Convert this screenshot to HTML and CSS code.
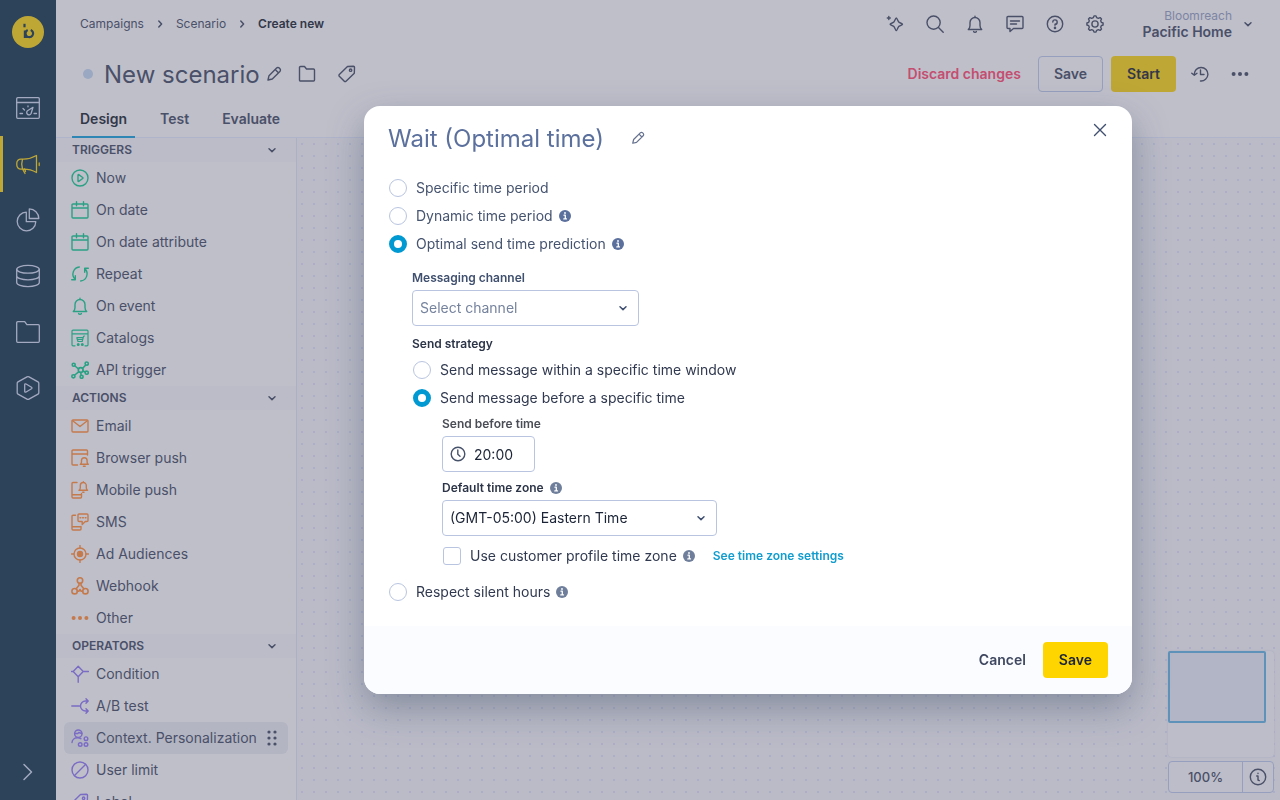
FILE: index.html
```
<!DOCTYPE html>
<html lang="en">
<head>
<meta charset="utf-8">
<meta name="viewport" content="width=device-width, initial-scale=1">
<title>New scenario</title>
<link rel="stylesheet" href="styles.css">
</head>
<body>
<svg class="sprite" aria-hidden="true">
  <symbol id="chevron-down" viewBox="0 0 16 16"><path d="M5 6.800 8 9.600l3-2.800" stroke-width="1.500"/></symbol>
  <symbol id="chevron-right" viewBox="0 0 16 16"><path d="m6.800 5 2.800 3-2.800 3" stroke-width="1.500"/></symbol>
  <symbol id="pencil" viewBox="0 0 16 16"><path d="M2 14l1-4.300 7.600-7.600a1.900 1.900 0 0 1 2.700 0l.6.600a1.900 1.900 0 0 1 0 2.700L6.300 13zM9.200 3.600l3.200 3.200"/></symbol>
  <symbol id="folder" viewBox="0 0 18 18"><path d="M1.500 2.500a1 1 0 0 1 1-1h4l2 2.500h7a1 1 0 0 1 1 1v10a1 1 0 0 1-1 1h-13a1 1 0 0 1-1-1z"/></symbol>
  <symbol id="tag" viewBox="0 0 18 18"><path d="m9.500 1.500 6-.2a1 1 0 0 1 1 1l-.2 6L8 16.300a1.200 1.200 0 0 1-1.700 0l-5-5a1.200 1.200 0 0 1 0-1.700z"/><circle cx="12.600" cy="5.200" r="1.200"/></symbol>
  <symbol id="bell" viewBox="0 0 18 18"><path d="M9 1.200v1.300M2.300 14.500h13.400c-1.200-1-1.700-2.200-1.700-4V7.500a5 5 0 0 0-10 0v3c0 1.800-.5 3-1.700 4zM7.600 16.600c.6.900 2.200.9 2.800 0"/></symbol>
  <symbol id="info" viewBox="0 0 12 12"><circle cx="6" cy="6" r="6" fill="currentColor" stroke="none"/><path d="M5 5.200h1.300v3.500M4.800 8.900h2.700" stroke="#fff" stroke-width="1.300"/><circle cx="6" cy="3" r=".9" fill="#fff" stroke="none"/></symbol>
  <symbol id="calendar" viewBox="0 0 18 18"><path d="M1 4a1 1 0 0 1 1-1h14a1 1 0 0 1 1 1v12a1 1 0 0 1-1 1H2a1 1 0 0 1-1-1zM1 7h16M5.500.8v4M12.500.8v4"/></symbol>
  <symbol id="play" viewBox="0 0 18 18"><circle cx="9" cy="9" r="8"/><path d="M7 6v6c0 .5.300.6.700.4l4-2.900c.4-.3.400-.7 0-1l-4-2.900c-.4-.2-.7-.1-.7.400z"/></symbol>
  <symbol id="repeat" viewBox="0 0 18 18"><path d="M4 14.200A7.200 7.200 0 0 1 8.300 2M9.700 16A7.200 7.200 0 0 0 14.200 4M17.300 3.300h-3.600v4M.7 14.700h3.600v-4"/></symbol>
  <symbol id="catalog" viewBox="0 0 18 18"><path d="M4 16.800H2a1 1 0 0 1-1-1V2.200a1 1 0 0 1 1-1h14a1 1 0 0 1 1 1v13.600a1 1 0 0 1-1 1h-2M1 4.800h16M13.500 7l-1 .3-1.300 5.200H7L5.800 8.700h6.200M6.400 10.500h5.200" stroke-width="1.200"/><circle cx="7.200" cy="15.500" r=".8"/><circle cx="11.300" cy="15.500" r=".8"/></symbol>
  <symbol id="api" viewBox="0 0 18 18"><g stroke-width="1.600"><path d="m7.500 8-3.500-3M11.700 7.300l2.800-3M12 10l2 1M7.700 10.800l-4 3.200M9.800 11.500l.3 3"/><circle cx="9.700" cy="9" r="2.400"/><circle cx="2.700" cy="3.800" r="1.500"/><circle cx="15.700" cy="2.600" r="1.600"/><circle cx="15.700" cy="11.700" r="1.600"/><circle cx="2.400" cy="15.300" r="1.600"/><circle cx="10.600" cy="15.800" r="1.500"/></g></symbol>
  <symbol id="mail" viewBox="0 0 18 18"><rect x="1" y="3" width="16" height="12" rx="1"/><path d="m2 4 7 5.500L16 4"/></symbol>
  <symbol id="browser-push" viewBox="0 0 18 18"><path d="M6.500 16H2a1 1 0 0 1-1-1V2a1 1 0 0 1 1-1h13.500a1 1 0 0 1 1 1v4M1 5h15.500M9.300 15.300h8c-.9-.6-1.200-1.300-1.200-2.300v-1.500a2.800 2.800 0 0 0-5.600 0V13c0 1-.3 1.700-1.200 2.300zM12.400 17.200h1.800"/></symbol>
  <symbol id="mobile-push" viewBox="0 0 18 18"><path d="M6 1.500H2a1 1 0 0 0-1 1V16a1 1 0 0 0 1 1h7.500a1 1 0 0 0 1-1v-3.500M1 13.700h9.500M8 9.300h8.600c-1-.6-1.300-1.300-1.300-2.500V4.500a3 3 0 0 0-6 0v2.300c0 1.200-.3 1.900-1.300 2.500zM12.300.8v.5M11.700 11.300H13"/></symbol>
  <symbol id="sms" viewBox="0 0 18 18"><path d="M4.500 2.200H2a1 1 0 0 0-1 1V16a1 1 0 0 0 1 1h7a1 1 0 0 0 1-1v-2.500M1 13.700h9M8 1h8a1 1 0 0 1 1 1v5.500a1 1 0 0 1-1 1h-1.700L11.200 11.500V8.500H8a1 1 0 0 1-1-1V2a1 1 0 0 1 1-1zM9 4.800h.8M11.600 4.800h.8M14.200 4.800h.8"/></symbol>
  <symbol id="target" viewBox="0 0 18 18"><circle cx="9" cy="9" r="6"/><circle cx="9" cy="9" r="2.500" fill="currentColor"/><path d="M9 .5V3M9 15v2.500M.5 9H3M15 9h2.500"/></symbol>
  <symbol id="webhook" viewBox="0 0 18 18"><g stroke-width="1.600"><circle cx="9" cy="3.500" r="2.700"/><circle cx="3.600" cy="14.200" r="2.700"/><circle cx="14.400" cy="14.200" r="2.700"/><path d="M8 6.200v2L5.200 11.700M10 6.200v2l2.800 3.500M6.300 14.200h1.500L9 12.500l1.200 1.700h1.500"/></g></symbol>
  <symbol id="dots" viewBox="0 0 18 18"><g fill="currentColor" stroke="none"><circle cx="2.600" cy="9" r="2"/><circle cx="9" cy="9" r="2"/><circle cx="15.400" cy="9" r="2"/></g></symbol>
  <symbol id="condition" viewBox="0 0 18 18"><path d="m7.200 1.200 5 5.300-5 5.200-5-5.200zM12.200 6.500h5.300M7.200 11.700v5.500M.5 6.500h1.700"/></symbol>
  <symbol id="split" viewBox="0 0 18 18"><path d="M.8 9h7.700M17 4h-2.500a5 5 0 0 0 0 10H17M15 1.800 17.200 4 15 6.300M15 11.800l2.200 2.200-2.200 2.300"/></symbol>
  <symbol id="people" viewBox="0 0 18 18"><circle cx="7.300" cy="4.700" r="3.700"/><path d="M3.800 4.500h3l1-1 3 1M1 13.500c.2-3 2.800-4.700 5.500-4.700 1.500 0 2.500.3 3.400.9"/><circle cx="15" cy="9.700" r="1.800"/><circle cx="15" cy="15.500" r="1.800"/><circle cx="9.200" cy="15.500" r="1.800"/></symbol>
  <symbol id="ban" viewBox="0 0 18 18"><circle cx="9" cy="9" r="8"/><path d="M14.500 3.500l-11 11"/></symbol>
</svg>

<div class="app">
  <nav class="rail" aria-label="Main">
    <a class="logo" href="#" aria-label="Bloomreach">
      <svg viewBox="0 0 32 32"><circle cx="16" cy="16" r="16" fill="#bfa736" stroke="none"/><path d="M12.500 7.800v3.500" stroke="#2d4359" stroke-width="2.200" stroke-linecap="butt"/><path d="M12.900 22v-7.500M15.700 14a3.800 3.800 0 1 0 3-.1M12.900 21h5" stroke="#2d4359" stroke-width="2.200" stroke-linecap="butt"/></svg>
    </a>
    <a class="rail-item" href="#" aria-label="Dashboards"><svg viewBox="0 0 24 24"><rect x=".7" y="1.700" width="22.600" height="20.600" rx="1"/><path d="M.7 6.500h22.600M4 17.500h2.500M18 17.500h2.500M7 12.500l1.500 1.500M12 9.800v1M17 11.300l-5.500 3.500a2.300 2.300 0 1 0 3.600 2.700z"/></svg></a>
    <a class="rail-item current" href="#" aria-label="Campaigns"><svg viewBox="0 0 24 24"><path d="M20.500 3.500v17c-4-2.300-8-3.400-13-3.400H4.800a4 4 0 0 1-4-4v-2a4 4 0 0 1 4-4h2.700c5 0 9-1.300 13-3.600zM6.500 7.200c-1 3-1 6.800 0 9.800l2.500 4.500M8.800 17l.7 2.500M23.200 11v2.500"/></svg></a>
    <a class="rail-item" href="#" aria-label="Analyses"><svg viewBox="0 0 24 24"><path d="M10.300 4.200a9.300 9.300 0 1 0 9.500 9.500h-9.500zM13.300.9a9.800 9.800 0 0 1 9.500 9.600h-9.500z"/></svg></a>
    <a class="rail-item" href="#" aria-label="Data"><svg viewBox="0 0 24 24"><ellipse cx="12" cy="5.300" rx="11.300" ry="3.900"/><path d="M.7 5.300v13.300c0 2.200 5 4 11.300 4s11.300-1.800 11.300-4V5.300M.7 12c0 2.100 5 3.900 11.300 3.900S23.300 14.100 23.300 12"/></svg></a>
    <a class="rail-item" href="#" aria-label="Files"><svg viewBox="0 0 24 24"><path d="M.7 2.700a1 1 0 0 1 1-1h7l2.200 3h11.400a1 1 0 0 1 1 1v15.600a1 1 0 0 1-1 1H1.700a1 1 0 0 1-1-1z"/></svg></a>
    <a class="rail-item" href="#" aria-label="Experiences"><svg viewBox="0 0 24 24"><path d="M11 .9a2 2 0 0 1 2 0l9 5a1.600 1.600 0 0 1 .8 1.400v9.400a1.600 1.600 0 0 1-.8 1.400l-9 5a2 2 0 0 1-2 0l-9-5a1.600 1.600 0 0 1-.8-1.400V7.300A1.600 1.600 0 0 1 2 5.900zM8.700 8.800v6.400c0 .9.700 1.200 1.400.8l5.400-3.200c.6-.4.600-1.200 0-1.600L10.100 8c-.7-.4-1.400-.1-1.400.8z"/></svg></a>
    <button class="rail-expand" aria-label="Expand menu"><svg viewBox="0 0 24 24"><path d="m8 4.500 7.500 7.500L8 19.500" stroke-width="1.500"/></svg></button>
  </nav>

  <main class="main">
    <header class="topbar">
      <nav class="crumbs" aria-label="Breadcrumb">
        <a href="#">Campaigns</a>
        <svg class="i16"><use href="#chevron-right"/></svg>
        <a href="#">Scenario</a>
        <svg class="i16"><use href="#chevron-right"/></svg>
        <span class="here">Create new</span>
      </nav>
      <div class="tools">
        <button aria-label="Assistant"><svg viewBox="0 0 18 18"><path d="M10.300 3c.8 0 1.700 3.400 2.400 4.100.7.700 3.800 1.400 3.800 2.200s-3.100 1.500-3.800 2.200c-.7.700-1.600 4.100-2.400 4.100s-1.700-3.400-2.400-4.100c-.7-.7-3.800-1.400-3.800-2.200s3.100-1.500 3.800-2.200C8.600 6.400 9.500 3 10.300 3zM2.800 1.500v3M1.300 3h3"/></svg></button>
        <button aria-label="Search"><svg viewBox="0 0 18 18"><circle cx="7.600" cy="7.600" r="6.600"/><path d="m12.500 12.500 4.700 4.700"/></svg></button>
        <button aria-label="Notifications"><svg><use href="#bell"/></svg></button>
        <button aria-label="Messages"><svg viewBox="0 0 18 18"><path d="M1 2.500a1 1 0 0 1 1-1h14a1 1 0 0 1 1 1v10a1 1 0 0 1-1 1H7.500L4 16.500v-3H2a1 1 0 0 1-1-1zM4.500 6h9M4.500 9h6"/></svg></button>
        <button aria-label="Help"><svg viewBox="0 0 18 18"><circle cx="9" cy="9" r="7.700"/><path d="M6.800 7A2.200 2.200 0 1 1 9 9.300v1"/><circle cx="9" cy="12.900" r=".6"/></svg></button>
        <button aria-label="Settings"><svg viewBox="0 0 18 18"><circle cx="9" cy="9" r="3.100"/><path d="m7.300 2.700.7-1.800h2l.7 1.800 1.600.7 1.800-.8 1.400 1.400-.8 1.700.6 1.600 1.800.7v2l-1.800.7-.6 1.600.8 1.700-1.400 1.400-1.800-.8-1.600.7-.7 1.800H8l-.7-1.800-1.600-.7-1.800.8L2.500 14l.8-1.700-.6-1.600L.9 10V8l1.800-.7.6-1.600L2.500 4l1.400-1.400 1.800.8z"/></svg></button>
      </div>
      <button class="account">
        <span class="account-names"><span class="org">Bloomreach</span><span class="project">Pacific Home</span></span>
        <svg class="i16"><use href="#chevron-down"/></svg>
      </button>
    </header>

    <section class="titlebar">
      <span class="status"></span>
      <h1>New scenario</h1>
      <button class="bare" aria-label="Rename"><svg class="i16"><use href="#pencil"/></svg></button>
      <button class="bare gap-left" aria-label="Folder"><svg><use href="#folder"/></svg></button>
      <button class="bare gap-more" aria-label="Tags"><svg><use href="#tag"/></svg></button>
      <div class="actions">
        <button class="discard">Discard changes</button>
        <button class="btn outline">Save</button>
        <button class="btn start">Start</button>
        <button class="bare wide" aria-label="History"><svg viewBox="0 0 18 18"><path d="M3.300 9.500A6.800 6.800 0 1 1 9.500 16M.8 8.300l2.500 2 2.700-2M9.500 5v4.500H13"/></svg></button>
        <button class="bare wide" aria-label="More"><svg><use href="#dots"/></svg></button>
      </div>
    </section>

    <nav class="tabs" aria-label="Scenario views">
      <a class="tab selected" href="#">Design</a>
      <a class="tab" href="#">Test</a>
      <a class="tab" href="#">Evaluate</a>
    </nav>

    <div class="workspace">
      <aside class="palette">
        <button class="group">TRIGGERS<svg class="i16"><use href="#chevron-down"/></svg></button>
        <ul class="green">
          <li><svg><use href="#play"/></svg>Now</li>
          <li><svg><use href="#calendar"/></svg>On date</li>
          <li><svg><use href="#calendar"/></svg>On date attribute</li>
          <li><svg><use href="#repeat"/></svg>Repeat</li>
          <li><svg><use href="#bell"/></svg>On event</li>
          <li><svg><use href="#catalog"/></svg>Catalogs</li>
          <li><svg><use href="#api"/></svg>API trigger</li>
        </ul>
        <button class="group">ACTIONS<svg class="i16"><use href="#chevron-down"/></svg></button>
        <ul class="orange">
          <li><svg><use href="#mail"/></svg>Email</li>
          <li><svg><use href="#browser-push"/></svg>Browser push</li>
          <li><svg><use href="#mobile-push"/></svg>Mobile push</li>
          <li><svg><use href="#sms"/></svg>SMS</li>
          <li><svg><use href="#target"/></svg>Ad Audiences</li>
          <li><svg><use href="#webhook"/></svg>Webhook</li>
          <li><svg><use href="#dots"/></svg>Other</li>
        </ul>
        <button class="group">OPERATORS<svg class="i16"><use href="#chevron-down"/></svg></button>
        <ul class="purple">
          <li><svg><use href="#condition"/></svg>Condition</li>
          <li><svg><use href="#split"/></svg>A/B test</li>
          <li class="hovered"><svg><use href="#people"/></svg>Context. Personalization
            <svg class="grip" viewBox="0 0 16 16"><g fill="currentColor" stroke="none"><circle cx="4" cy="2" r="1.600"/><circle cx="10" cy="2" r="1.600"/><circle cx="4" cy="8" r="1.600"/><circle cx="10" cy="8" r="1.600"/><circle cx="4" cy="14" r="1.600"/><circle cx="10" cy="14" r="1.600"/></g></svg></li>
          <li><svg><use href="#ban"/></svg>User limit</li>
          <li><svg><use href="#tag"/></svg>Label</li>
        </ul>
      </aside>
      <section class="canvas" aria-label="Canvas">
        <div class="map-tools">
          <div class="minimap"><div class="viewport"></div></div>
          <div class="zoom"><button class="level">100%</button><button class="about" aria-label="Info"><svg viewBox="0 0 18 18"><circle cx="9" cy="9" r="7.700"/><path d="M7.700 8H9v4l1.300.6M9 5.200v.3"/></svg></button></div>
        </div>
      </section>
    </div>
  </main>
</div>

<div class="overlay">
  <form class="dialog" role="dialog" aria-labelledby="dialog-title">
    <header class="dialog-head">
      <h2 id="dialog-title">Wait (Optimal time)</h2>
      <button type="button" class="bare edit" aria-label="Rename"><svg class="i14"><use href="#pencil"/></svg></button>
      <button type="button" class="bare close" aria-label="Close"><svg class="i16" viewBox="0 0 16 16"><path d="m2.500 2.500 11 11M13.500 2.500l-11 11"/></svg></button>
    </header>
    <div class="dialog-body">
      <div class="options soft">
        <label class="option"><input type="radio" name="mode">Specific time period</label>
        <label class="option"><input type="radio" name="mode">Dynamic time period <svg class="info"><use href="#info"/></svg></label>
        <label class="option"><input type="radio" name="mode" checked>Optimal send time prediction <svg class="info"><use href="#info"/></svg></label>
      </div>
      <div class="nested">
        <label class="caption soft-caption" for="channel">Messaging channel</label>
        <div class="field channel"><select id="channel"><option>Select channel</option></select><svg class="i16"><use href="#chevron-down"/></svg></div>
        <p class="caption strategy" id="strategy">Send strategy</p>
        <div class="options" role="radiogroup" aria-labelledby="strategy">
          <label class="option"><input type="radio" name="strategy">Send message within a specific time window</label>
          <label class="option"><input type="radio" name="strategy" checked>Send message before a specific time</label>
        </div>
        <div class="deep">
          <label class="caption gray-caption" for="time">Send before time</label>
          <div class="field time"><svg class="i16" viewBox="0 0 16 16"><circle cx="8" cy="8" r="6.800"/><path d="M7.800 4v4.300l2.200 2"/></svg><input id="time" type="text" value="20:00"></div>
          <label class="caption zone-caption" for="zone">Default time zone <svg class="info muted"><use href="#info"/></svg></label>
          <div class="field zone"><select id="zone"><option>(GMT-05:00) Eastern Time</option></select><svg class="i16"><use href="#chevron-down"/></svg></div>
          <div class="profile">
            <label class="option"><input type="checkbox">Use customer profile time zone <svg class="info muted"><use href="#info"/></svg></label>
            <a href="#">See time zone settings</a>
          </div>
        </div>
      </div>
      <label class="option silent"><input type="radio" name="mode">Respect silent hours <svg class="info muted"><use href="#info"/></svg></label>
    </div>
    <footer class="dialog-foot">
      <button type="button" class="btn plain">Cancel</button>
      <button type="submit" class="btn primary">Save</button>
    </footer>
  </form>
</div>
</body>
</html>
```
FILE: styles.css
```
:root {
  --surface: #bfbfca;
  --line: #a9b0c8;
  --ink: #4a5068;
  --ink-strong: #333849;
  --yellow: #bfa736;
  --rail: #2d4359;
  --field-line: #b9c5e0;
  --blue: #0099d1;
}

* { box-sizing: border-box; }

body {
  margin: 0;
  font: 400 14px/20px Inter, "Liberation Sans", sans-serif;
  color: var(--ink);
  background: var(--surface);
}

h1, h2, p, ul { margin: 0; padding: 0; }
ul { list-style: none; }
a { color: inherit; text-decoration: none; }

button, input, select {
  font: inherit;
  color: inherit;
  margin: 0;
  padding: 0;
  border: 0;
  background: none;
}

svg {
  display: block;
  flex: none;
  width: 18px;
  height: 18px;
  fill: none;
  stroke: currentColor;
  stroke-width: 1.400;
  stroke-linecap: round;
  stroke-linejoin: round;
}
.sprite { position: absolute; width: 0; height: 0; }
.i16 { width: 16px; height: 16px; }
.i14 { width: 14px; height: 14px; }

.app { display: flex; height: 100vh; overflow: hidden; }

/* Left rail */
.rail {
  flex: none;
  width: 56px;
  display: flex;
  flex-direction: column;
  align-items: stretch;
  color: #a3a9c0;
  background: var(--rail);
}
.logo { padding: 16px 12px 32px; }
.logo svg { width: 32px; height: 32px; }
.rail-item {
  height: 56px;
  display: flex;
  align-items: center;
  justify-content: center;
}
.rail-item svg, .rail-expand svg { width: 24px; height: 24px; stroke-width: 1.300; }
.rail-item.current { color: var(--yellow); box-shadow: inset 3px 0 var(--yellow); }
.rail-expand {
  height: 56px;
  margin-top: auto;
  display: flex;
  align-items: center;
  justify-content: center;
}

/* Header */
.main { flex: 1; min-width: 0; display: flex; flex-direction: column; }
.topbar { flex: none; display: flex; align-items: center; height: 48px; padding: 0 24px; }
.crumbs { display: flex; align-items: center; gap: 8px; font-size: 12px; }
.here { font-weight: 600; color: var(--ink-strong); }
.tools { display: flex; gap: 22px; margin-left: auto; }
.account { display: flex; align-items: center; gap: 8px; margin-left: 39px; }
.account-names { display: flex; flex-direction: column; text-align: right; line-height: 16px; }
.org { font-size: 12px; color: #7d85a3; }
.project { font-weight: 600; }

.titlebar { flex: none; display: flex; align-items: center; height: 52px; padding: 0 24px 0 27px; }
.status { width: 10px; height: 10px; border-radius: 50%; background: #9ba8c2; }
h1 { margin: 0 6px 0 11px; padding-top: 1px; font-size: 24px; line-height: 32px; font-weight: 400; }
.gap-left { margin-left: 16px; }
.gap-more { margin-left: 22px; }
.actions { display: flex; align-items: center; gap: 8px; margin-left: auto; }
.discard { margin-right: 9px; font-weight: 600; color: #c44e70; }
.wide { width: 32px; display: flex; justify-content: center; }
.btn { height: 36px; padding: 0 16px; border-radius: 4px; font-weight: 600; }
.outline { padding: 0 15px; border: 1px solid #969fbe; }
.start { color: var(--ink-strong); background: var(--yellow); }

.tabs {
  flex: none;
  display: flex;
  gap: 17px;
  padding: 0 16px;
  border-bottom: 1px solid #afb4cb;
  height: 38px;
}
.tab { height: 38px; padding: 9px 8px; font-weight: 600; border-bottom: 2px solid transparent; }
.tab.selected { color: var(--ink-strong); border-color: #2d86b4; }

/* Block palette */
.workspace { flex: 1; min-height: 0; display: flex; }
.palette { flex: none; width: 241px; overflow: hidden; border-right: 1px solid var(--line); }
.group {
  display: flex;
  align-items: center;
  justify-content: space-between;
  width: 100%;
  height: 24px;
  padding: 0 16px;
  font-size: 12px;
  font-weight: 600;
  background: #bcbcc9;
}
.palette li {
  display: flex;
  align-items: center;
  gap: 7px;
  height: 32px;
  margin: 0 8px;
  padding: 0 7px;
  border-radius: 6px;
  white-space: nowrap;
  color: var(--ink);
}
.palette li.hovered { background: #b3b5c3; }
.green svg { color: #2ba184; }
.orange svg { color: #c57a4c; }
.purple svg { color: #7a6cc4; }
.palette .grip { width: 16px; height: 16px; margin-left: auto; color: var(--ink); }

/* Canvas */
.canvas {
  flex: 1;
  display: flex;
  align-items: flex-end;
  justify-content: flex-end;
  padding: 6px 6px 7px;
  background: #bbbbc8 radial-gradient(circle, #adafc8 1px, transparent 1px) -1px 0 / 12px 12px;
}
.map-tools { display: flex; flex-direction: column; gap: 4px; width: 106px; }
.minimap { height: 106px; border-radius: 4px; background: #bdbdc9; box-shadow: 0 0 2px #a5a9bf; }
.viewport {
  width: 98px;
  height: 72px;
  border: 2px solid #5e92b8;
  border-radius: 2px;
  background: #b1b5c5;
}
.zoom { display: flex; height: 32px; border: 1px solid #969fbe; border-radius: 4px; background: #bdbdc9; }
.level { flex: 1; font-size: 13px; font-weight: 500; }
.about { width: 31px; display: flex; align-items: center; justify-content: center; border-left: 1px solid #969fbe; }

/* Dialog */
.overlay {
  position: fixed;
  inset: 0 0 0 216px;
  display: flex;
  align-items: center;
  justify-content: center;
}
.dialog {
  width: 768px;
  max-width: 92%;
  border-radius: 16px;
  overflow: hidden;
  color: #3f4860;
  background: #fff;
  box-shadow: 0 14px 36px rgba(45, 67, 89, .38);
}
.dialog-head { display: flex; align-items: center; height: 64px; padding: 0 24px; }
h2 { padding-top: 2px; font-size: 24px; line-height: 32px; font-weight: 400; color: #5b709d; }
.edit { margin-left: 27px; color: #66728f; }
.close { align-self: flex-start; margin: 16px 0 0 auto; color: #3f4f70; }
.dialog-body { padding: 4px 24px 20px; }
.option { display: flex; align-items: center; height: 28px; color: #30394f; }
.soft .option { color: #46546f; }
.option input {
  appearance: none;
  flex: none;
  width: 18px;
  height: 18px;
  margin: 0 9px 0 1px;
  border: 1px solid var(--field-line);
  background: #fff;
}
.option input[type="radio"] { border-radius: 50%; }
.option input[type="radio"]:checked { border: 5px solid var(--blue); }
.option input[type="checkbox"] { border-radius: 3px; }
.info { width: 12px; height: 12px; margin-left: 6px; color: #5b709d; }
.muted { color: #6f7f9b; }

.nested { padding: 10px 0 0 24px; }
.deep { padding: 2px 0 0 30px; }
.caption { display: block; font-size: 12px; line-height: 20px; font-weight: 600; color: #2c3447; }
.soft-caption { color: #40506f; }
.gray-caption { color: #4a4d55; }
.strategy { margin: 8px 0 2px; }
.zone-caption { display: flex; align-items: center; margin-top: 6px; }
.field {
  position: relative;
  display: flex;
  align-items: center;
  height: 36px;
  margin-top: 2px;
  border: 1px solid var(--field-line);
  border-radius: 4px;
  color: #1b2436;
}
.field select { appearance: none; width: 100%; height: 100%; padding: 0 32px 0 7px; background: transparent; }
.field select + svg { position: absolute; right: 7px; color: #3f4f70; pointer-events: none; }
.channel { width: 227px; }
.channel select { color: #75839d; }
.time { width: 93px; gap: 8px; padding: 0 7px; }
.time svg { color: #46516a; }
.time input { flex: 1; min-width: 0; height: 100%; }
.zone { width: 275px; }
.profile { display: flex; align-items: center; gap: 18px; margin-top: 6px; }
.profile a { font-size: 12px; font-weight: 600; color: #129dcf; }
.silent { margin-top: 8px; }

.dialog-foot {
  display: flex;
  justify-content: flex-end;
  gap: 1px;
  padding: 16px 24px;
  background: #fbfcff;
}
.primary { color: #1b2436; background: #ffd500; }
```
